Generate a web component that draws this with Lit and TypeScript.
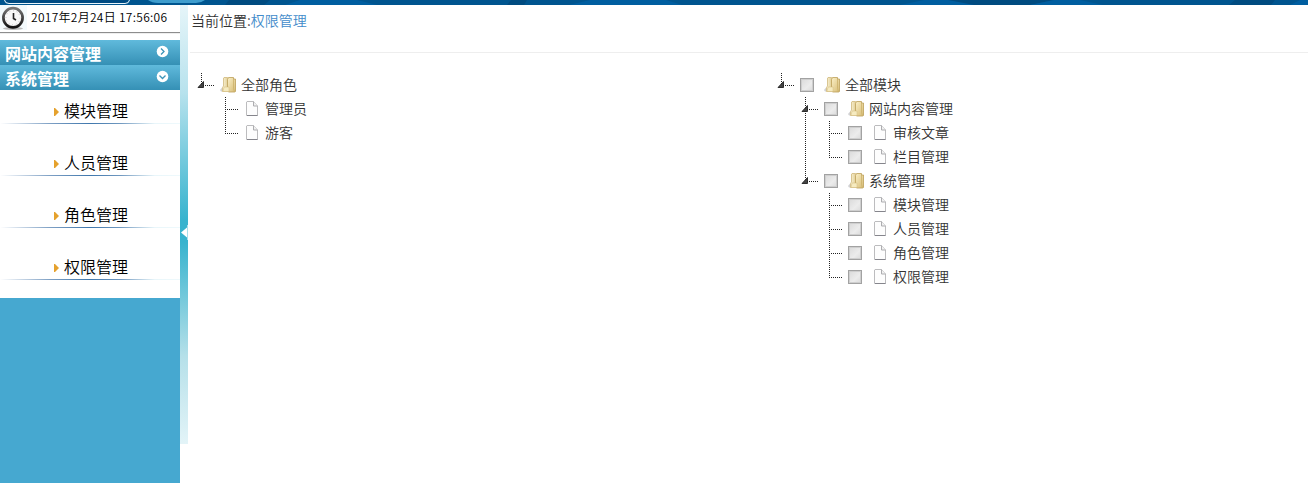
import { LitElement, html, css, svg, nothing } from "lit";
import { customElement, property } from "lit/decorators.js";

interface TreeNode {
  label: string;
  children?: TreeNode[];
}

const roles: TreeNode = {
  label: "全部角色",
  children: [{ label: "管理员" }, { label: "游客" }],
};

const modules: TreeNode = {
  label: "全部模块",
  children: [
    { label: "网站内容管理", children: [{ label: "审核文章" }, { label: "栏目管理" }] },
    {
      label: "系统管理",
      children: [{ label: "模块管理" }, { label: "人员管理" }, { label: "角色管理" }, { label: "权限管理" }],
    },
  ],
};

const folderIcon = html`<svg class="icon" width="18" height="18" viewBox="0 0 18 18">
  <defs>
    <linearGradient id="fb" x1="0" x2="1"><stop offset="0" stop-color="#fdf6da" /><stop offset="1" stop-color="#dcc88c" /></linearGradient>
    <linearGradient id="ff" x1="0" x2="1" y2="1"><stop offset="0" stop-color="#fbf0c8" /><stop offset="1" stop-color="#d6bb74" /></linearGradient>
  </defs>
  <path d="M0 14L2.500 11V15.500H1Z" fill="#d2d2d4" />
  <path d="M3.500 2L4 1.500H7.500L8.500 2.500V13L7.500 15.500H2.500V11.500L3.500 10Z" fill="url(#fb)" stroke="#d0b97c" stroke-width=".8" />
  <path d="M7.500 3.500L8.500 1.500H13.500V3H15.500V15.500L14.500 16H8.500L7.500 14Z" fill="url(#ff)" stroke="#bd9f58" stroke-width=".8" />
  <path d="M13.500 3V12.500L14.500 16" fill="none" stroke="#c9ad66" stroke-width=".7" />
  <path d="M4 11H9V15.500H3Z" fill="#f6ebc0" stroke="#d0b97c" stroke-width=".5" />
</svg>`;

const fileIcon = html`<svg class="icon" width="18" height="18" viewBox="0 0 18 18">
  <path d="M3 1.500H9.500L13.500 6V15.500H2.500V2Z" fill="#fdfdfd" stroke="#bcbcbe" />
  <path d="M9.500 1.500V6H13.500" fill="#f1f1f1" stroke="#adadb0" />
  <path d="M3 15.500H13.500" stroke="#85858c" />
</svg>`;

@customElement("node-tree")
class NodeTree extends LitElement {
  @property({ attribute: false }) root!: TreeNode;
  @property({ type: Boolean }) checkable = false;

  static styles = css`
    :host { display: block; }
    .row { display: flex; height: 24px; align-items: center; }
    .cell { flex: none; width: 24px; height: 24px; display: block; }
    .line { stroke: #222; stroke-width: 1; stroke-dasharray: 1 1; fill: none; }
    .check { flex: none; width: 24px; display: flex; }
    .box {
      box-sizing: border-box; width: 14px; height: 14px; border: 1px solid #a2a2a2;
      background: linear-gradient(135deg, #dadada, #ececec 60%, #dadada);
      box-shadow: inset 0 0 0 1px #cfcfcf;
    }
    .icon { flex: none; width: 18px; height: 18px; margin-right: 3px; }
    .label { font-size: 14px; line-height: 22px; height: 24px; color: #333; white-space: nowrap; }
  `;

  private rows(node: TreeNode, guides: boolean[], last: boolean, isRoot: boolean): unknown {
    const open = !!node.children;
    const next = isRoot ? [] : [...guides, !last];
    return html`
      <div class="row">
        ${guides.map((on) => html`<svg class="cell" viewBox="0 0 24 24">${on ? svg`<path class="line" d="M5.500 0V24" />` : nothing}</svg>`)}
        <svg class="cell" viewBox="0 0 24 24">
          <path class="line" d=${last || isRoot ? "M5.500 0V12" : "M5.500 0V24"} />
          <path class="line" d="M5 12.500H18" />
          ${open ? svg`<path d="M7.500 8.500V14.500H2Z" fill="#444" stroke="#222" stroke-width=".9" />` : nothing}
        </svg>
        ${this.checkable ? html`<span class="check"><span class="box"></span></span>` : nothing}
        ${open ? folderIcon : fileIcon}
        <span class="label">${node.label}</span>
      </div>
      ${node.children?.map((c, i, all) => this.rows(c, isRoot ? [false] : next, i === all.length - 1, false))}
    `;
  }

  render() {
    return this.rows(this.root, [], true, true);
  }
}

@customElement("app-root")
class AppRoot extends LitElement {
  static styles = css`
    :host {
      display: block; width: 1308px; height: 483px; overflow: hidden; background: #fff;
      font-family: "Noto Sans CJK SC", sans-serif; font-weight: 350; color: #333;
    }
    .banner { display: block; width: 1308px; height: 5px; }
    .body { display: flex; height: 478px; }
    .side { width: 180px; background: #46a8d0; flex: none; }
    .clock { display: flex; height: 27px; background: #fff; align-items: flex-start; }
    .clock svg { flex: none; width: 27px; height: 27px; }
    .time { margin-left: 4px; font-size: 12px; line-height: 24px; letter-spacing: .29px; color: #000; white-space: nowrap; }
    .rule { height: 1px; background: #8d8d8d; border-bottom: 1px solid #eee; }
    .gap { height: 6px; background: #fff; }
    .head {
      display: flex; justify-content: space-between; height: 25px; box-sizing: border-box;
      padding: 0 11px 0 5px; background: linear-gradient(#60badc, #3590b5);
      color: #fff; font-size: 16px; font-weight: 700; line-height: 27px;
    }
    .head svg { width: 13px; height: 13px; margin-top: 5px; }
    .menu { background: #fff; height: 208px; }
    .item {
      display: flex; align-items: flex-start; height: 34px; box-sizing: border-box;
      padding: 9px 0 0 54px; margin-bottom: 18px; font-size: 16px; line-height: 22px; color: #000;
      background: linear-gradient(90deg, #fff, #7d9fc4 28%, #3f77ad 50%, #7199c0 67%, #e9f6fa 86%, #eef9fc) 0 33px / 180px 1px no-repeat;
    }
    .item svg { width: 5px; height: 8px; margin: 9px 5px 0 0; }
    .split {
      flex: none; width: 8px; height: 439px; display: flex; flex-direction: column;
      background: linear-gradient(#e6f5f9, #b7e2ed 20%, #37b3ce 49%, #37b3ce 54%, #b5e0e9 80%, #e3f4f8);
    }
    .handle { width: 8px; height: 15px; margin-top: 220px; }
    .main { flex: 1; min-width: 0; padding-left: 2px; }
    .crumb { height: 47px; padding-left: 1px; font-size: 14px; line-height: 30px; border-bottom: 1px solid #eee; }
    .crumb a { color: #428bca; }
    .trees { display: flex; padding: 20px 0 0 6px; }
    .trees node-tree { width: 580px; flex: none; }
  `;

  render() {
    return html`
      <svg class="banner" viewBox="0 0 1308 5">
        <rect width="1308" height="5" fill="#00558f" />
        <path d="M5 0H129L126 3H8Z" fill="#004b82" />
        <path d="M229 0H270L264 5H225ZM511 0H527L524 5H507ZM946 0H1054L1030 5H970ZM1235 0H1275L1271 5H1229Z" fill="#004b80" />
        <path d="M300 0H357L377 5H285ZM590 0H666L682 5H569ZM924 0H948L974 5H900ZM1054 0H1080L1103 5H1030ZM1300 0H1308V5H1290Z" fill="#005ea0" />
        <path d="M4.500 0Q5 3.500 9 3.500H125Q129 3.500 129.500 0" fill="none" stroke="#eaf5fa" />
        <path d="M148 0H205Q201 3 196 3H158Q152 3 148 0Z" fill="#3f9dcd" />
      </svg>
      <div class="body">
        <div class="side">
          <div class="clock">
            <svg viewBox="0 0 27 27">
              <defs><linearGradient id="rim" x2="0" y2="1"><stop stop-color="#777" /><stop offset="1" stop-color="#111" /></linearGradient></defs>
              <rect width="27" height="25" fill="#f3fafc" />
              <ellipse cx="13" cy="23.500" rx="10" ry="1.500" fill="#bbb" />
              <circle cx="13" cy="12.800" r="9.600" fill="#f8f8f8" stroke="url(#rim)" stroke-width="2.700" />
              <circle cx="13" cy="12.800" r="7" fill="none" stroke="#aaa" stroke-width="1" stroke-dasharray=".6 3.065" />
              <path d="M13.500 8V13.500L16 15" fill="none" stroke="#222" stroke-width="1.600" />
            </svg>
            <span class="time">2017年2月24日 17:56:06</span>
          </div>
          <div class="rule"></div>
          <div class="gap"></div>
          <div class="head"><span>网站内容管理</span>
            <svg viewBox="0 0 13 13"><circle cx="6.500" cy="6.500" r="5.800" fill="#fff" /><path d="M5 3.500L8 6.500L5 9.500" fill="none" stroke="#3c94b8" stroke-width="1.300" /></svg>
          </div>
          <div class="head"><span>系统管理</span>
            <svg viewBox="0 0 13 13"><circle cx="6.500" cy="6.500" r="5.800" fill="#fff" /><path d="M3.500 5.500L6.500 8.500L9.500 5.500" fill="none" stroke="#3c94b8" stroke-width="1.300" /></svg>
          </div>
          <div class="menu">
            ${["模块管理", "人员管理", "角色管理", "权限管理"].map(
              (t) => html`<div class="item"><svg viewBox="0 0 5 8"><path d="M0 0H1L5 4L1 8H0Z" fill="#e5a12d" /></svg><span>${t}</span></div>`
            )}
          </div>
        </div>
        <div class="split">
          <svg class="handle" viewBox="0 0 8 15"><path d="M7 0H8V15H7Z" fill="#a9dfeb" /><path d="M1 7.500L7 2.500V12.500Z" fill="#fff" /></svg>
        </div>
        <div class="main">
          <div class="crumb">当前位置:<a>权限管理</a></div>
          <div class="trees">
            <node-tree .root=${roles}></node-tree>
            <node-tree .root=${modules} checkable></node-tree>
          </div>
        </div>
      </div>
    `;
  }
}
